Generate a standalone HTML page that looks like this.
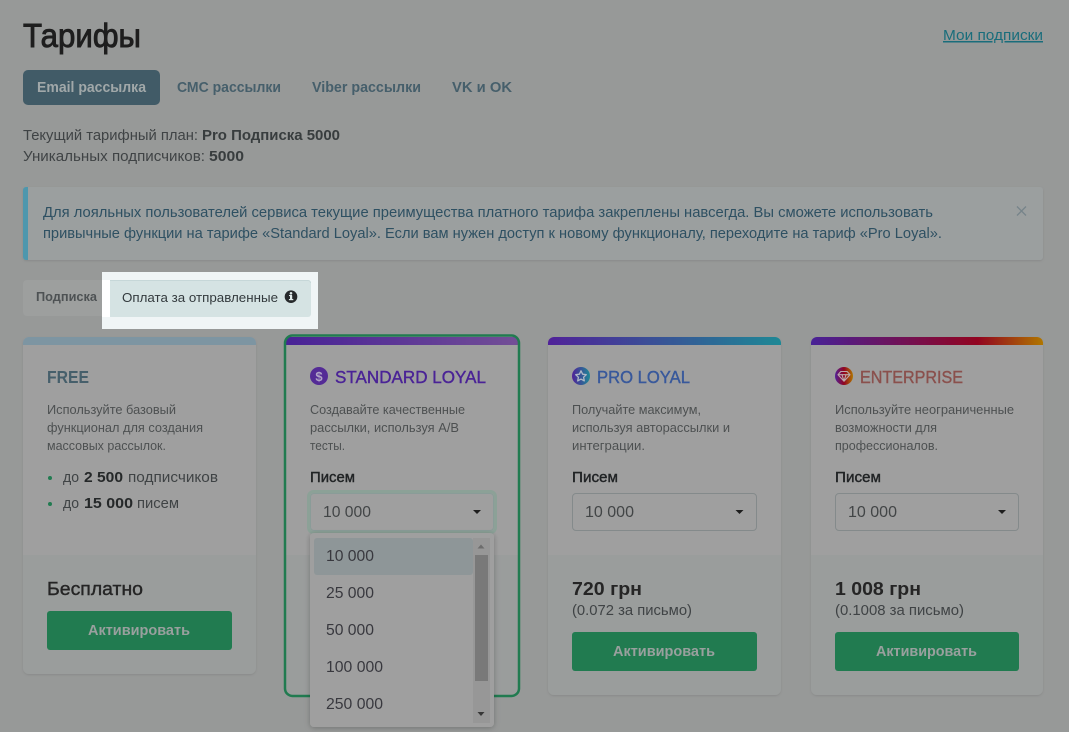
<!DOCTYPE html>
<html lang="ru"><head><meta charset="utf-8"><title>Тарифы</title>
<style>
html,body{margin:0;padding:0;width:1069px;height:732px;overflow:hidden;background:#a9abaa}
svg{display:block}
text{font-family:"Liberation Sans",sans-serif;white-space:pre}
.b{font-weight:700}
.m{stroke:currentColor;stroke-width:.4px}
.d{font-size:13px;fill:#565a5b}
.s{font-size:14.5px;fill:#474b4d}
.o{font-size:15.5px;fill:#3f3f46}
.btn{font-size:14.5px;font-weight:700;fill:#abb3b0}
.h{font-size:17.5px}
.a{font-size:14.5px;fill:#345a6e}
.n{font-size:14.5px;font-weight:700;fill:#4f6a78}
</style></head><body>
<svg width="1069" height="732" viewBox="0 0 1069 732" xmlns="http://www.w3.org/2000/svg">
<defs>
<linearGradient id="g1" x1="0" x2="1" y1="0" y2="0"><stop offset="0" stop-color="#5126a8"/><stop offset="1" stop-color="#8058a8"/></linearGradient>
<linearGradient id="g2" x1="0" x2="1" y1="0" y2="0"><stop offset="0" stop-color="#5a26ab"/><stop offset="1" stop-color="#2298a6"/></linearGradient>
<linearGradient id="g3" x1="0" x2="1" y1="0" y2="0"><stop offset="0" stop-color="#5126a8"/><stop offset=".72" stop-color="#a30524"/><stop offset="1" stop-color="#c48400"/></linearGradient>
<linearGradient id="g4" x1="0" x2="1" y1="0" y2="0"><stop offset="0" stop-color="#5a26ab"/><stop offset=".5" stop-color="#a30524"/><stop offset="1" stop-color="#c48400"/></linearGradient>
<filter id="sh" x="-10%" y="-10%" width="120%" height="120%"><feDropShadow dx="0" dy="1" stdDeviation="1" flood-color="#000" flood-opacity=".1"/></filter>
<filter id="sd" x="-20%" y="-20%" width="140%" height="140%"><feDropShadow dx="0" dy="1" stdDeviation="3" flood-color="#000" flood-opacity=".25"/></filter>
<clipPath id="c1"><rect x="23" y="337" width="233" height="337" rx="6"/></clipPath>
<clipPath id="c2"><rect x="285" y="336" width="234" height="360" rx="7"/></clipPath>
<clipPath id="c3"><rect x="548" y="337" width="233" height="358" rx="6"/></clipPath>
<clipPath id="c4"><rect x="811" y="337" width="232" height="358" rx="6"/></clipPath>
</defs>

<rect width="1069" height="732" fill="#a9abaa"/>

<!-- header -->
<text x="23" y="47" font-size="33" class="m" style="color:#222;stroke-width:.9px" fill="#222" textLength="118" lengthAdjust="spacingAndGlyphs">Тарифы</text>
<text x="943" y="40" font-size="15" fill="#1c7a8a" textLength="100" lengthAdjust="spacingAndGlyphs" text-decoration="underline">Мои подписки</text>

<!-- nav -->
<rect x="23" y="70" width="137" height="35" rx="5" fill="#496673"/>
<text x="37" y="92" class="n" style="fill:#b4bcbd" textLength="109" lengthAdjust="spacingAndGlyphs">Email рассылка</text>
<text x="177" y="92" class="n" textLength="104" lengthAdjust="spacingAndGlyphs">СМС рассылки</text>
<text x="312" y="92" class="n" textLength="109" lengthAdjust="spacingAndGlyphs">Viber рассылки</text>
<text x="452" y="92" class="n" textLength="60" lengthAdjust="spacingAndGlyphs">VK и OK</text>

<!-- plan -->
<text x="23" y="140" class="s" textLength="175" lengthAdjust="spacingAndGlyphs">Текущий тарифный план:</text>
<text x="202" y="140" font-size="14.5" class="b" fill="#3f4446" textLength="138" lengthAdjust="spacingAndGlyphs">Pro Подписка 5000</text>
<text x="23" y="161" class="s" textLength="182" lengthAdjust="spacingAndGlyphs">Уникальных подписчиков:</text>
<text x="209" y="161" font-size="14.5" class="b" fill="#3f4446" textLength="35" lengthAdjust="spacingAndGlyphs">5000</text>

<!-- alert -->
<rect x="23" y="187" width="1020" height="73" rx="3" fill="#adb1b1" filter="url(#sh)"/>
<path d="M26 187h2v73h-2a3 3 0 0 1-3-3v-67a3 3 0 0 1 3-3z" fill="#57a9c1"/>
<text x="43" y="217" class="a" textLength="890" lengthAdjust="spacingAndGlyphs">Для лояльных пользователей сервиса текущие преимущества платного тарифа закреплены навсегда. Вы сможете использовать</text>
<text x="43" y="238" class="a" textLength="899" lengthAdjust="spacingAndGlyphs">привычные функции на тарифе «Standard Loyal». Если вам нужен доступ к новому функционалу, переходите на тариф «Pro Loyal».</text>
<path d="M1017 206.500l9 9M1026 206.500l-9 9" stroke="#84939a" stroke-width="1.300" fill="none"/>

<!-- sub tabs -->
<rect x="23" y="280" width="84" height="36" rx="4" fill="#afb1b0"/>
<text x="36" y="301" font-size="13" class="b" fill="#575c5e" textLength="61" lengthAdjust="spacingAndGlyphs">Подписка</text>

<!-- card free -->
<g filter="url(#sh)"><rect x="23" y="337" width="233" height="337" rx="6" fill="#acafae"/></g>
<g clip-path="url(#c1)"><rect x="23" y="337" width="233" height="218" fill="#b2b2b2"/><rect x="23" y="337" width="233" height="8" fill="#8ca6b5"/></g>
<text x="47" y="383" class="h b" fill="#4f6a78" textLength="42" lengthAdjust="spacingAndGlyphs">FREE</text>
<text x="47" y="414" class="d" textLength="129" lengthAdjust="spacingAndGlyphs">Используйте базовый</text>
<text x="47" y="432" class="d" textLength="156" lengthAdjust="spacingAndGlyphs">функционал для создания</text>
<text x="47" y="450" class="d" textLength="119" lengthAdjust="spacingAndGlyphs">массовых рассылок.</text>
<circle cx="50" cy="478" r="2" fill="#25895a"/>
<circle cx="50" cy="504" r="2" fill="#25895a"/>
<text x="63" y="482" class="s" textLength="16" lengthAdjust="spacingAndGlyphs">до</text>
<text x="84" y="482" font-size="14.5" class="b" fill="#2a2d2e" textLength="39" lengthAdjust="spacingAndGlyphs">2 500</text>
<text x="128" y="482" class="s" textLength="90" lengthAdjust="spacingAndGlyphs">подписчиков</text>
<text x="63" y="508" class="s" textLength="16" lengthAdjust="spacingAndGlyphs">до</text>
<text x="84" y="508" font-size="14.5" class="b" fill="#2a2d2e" textLength="49" lengthAdjust="spacingAndGlyphs">15 000</text>
<text x="137" y="508" class="s" textLength="42" lengthAdjust="spacingAndGlyphs">писем</text>
<text x="47" y="595" font-size="18.5" class="m" style="color:#2a2a2a" fill="#2a2a2a" textLength="96" lengthAdjust="spacingAndGlyphs">Бесплатно</text>
<rect x="47" y="611" width="185" height="39" rx="3" fill="#25895a"/>
<text x="88" y="635" class="btn" textLength="102" lengthAdjust="spacingAndGlyphs">Активировать</text>

<!-- card standard -->
<g clip-path="url(#c2)"><rect x="285" y="336" width="234" height="360" fill="#acafae"/><rect x="285" y="336" width="234" height="219" fill="#b2b2b2"/><rect x="285" y="337" width="234" height="8" fill="url(#g1)"/></g>
<rect x="285" y="335.500" width="234" height="360.500" rx="7.500" fill="none" stroke="#25895a" stroke-width="2.500"/>
<circle cx="319" cy="376" r="9" fill="#5e30a8"/>
<text x="319" y="381" font-size="13" class="b" fill="#c6b8dd" text-anchor="middle">$</text>
<text x="335" y="383" class="h m" style="color:#5327a8" fill="#5327a8" textLength="151" lengthAdjust="spacingAndGlyphs">STANDARD LOYAL</text>
<text x="310" y="414" class="d" textLength="155" lengthAdjust="spacingAndGlyphs">Создавайте качественные</text>
<text x="310" y="432" class="d" textLength="149" lengthAdjust="spacingAndGlyphs">рассылки, используя A/B</text>
<text x="310" y="450" class="d" textLength="35" lengthAdjust="spacingAndGlyphs">тесты.</text>
<text x="310" y="482" font-size="14.5" class="m" style="color:#25282a" fill="#25282a" textLength="45" lengthAdjust="spacingAndGlyphs">Писем</text>
<rect x="308.500" y="491.500" width="187" height="41" rx="5" fill="none" stroke="#9cb4a9" stroke-width="3"/>
<rect x="310.500" y="493.500" width="183" height="37" rx="3.500" fill="#b2b2b2" stroke="#9aaeaa"/>
<text x="323" y="517" font-size="15.5" fill="#4a4d4f" textLength="48" lengthAdjust="spacingAndGlyphs">10 000</text>
<path d="M473 510h8l-4 4z" fill="#222"/>

<!-- card pro -->
<g filter="url(#sh)"><rect x="548" y="337" width="233" height="358" rx="6" fill="#acafae"/></g>
<g clip-path="url(#c3)"><rect x="548" y="337" width="233" height="218" fill="#b2b2b2"/><rect x="548" y="337" width="233" height="8" fill="url(#g2)"/></g>
<circle cx="581" cy="376" r="9" fill="url(#g2)"/>
<path d="M581 370.800l1.600 3.400 3.700.5-2.700 2.500.7 3.700-3.300-1.800-3.300 1.800.7-3.700-2.700-2.500 3.700-.5z" fill="none" stroke="#c4cddd" stroke-width="1.300" stroke-linejoin="round"/>
<text x="597" y="383" class="h m" style="color:#3f63ad" fill="#3f63ad" textLength="93" lengthAdjust="spacingAndGlyphs">PRO LOYAL</text>
<text x="572" y="414" class="d" textLength="129" lengthAdjust="spacingAndGlyphs">Получайте максимум,</text>
<text x="572" y="432" class="d" textLength="158" lengthAdjust="spacingAndGlyphs">используя авторассылки и</text>
<text x="572" y="450" class="d" textLength="73" lengthAdjust="spacingAndGlyphs">интеграции.</text>
<text x="572" y="482" font-size="14.5" class="m" style="color:#25282a" fill="#25282a" textLength="46" lengthAdjust="spacingAndGlyphs">Писем</text>
<rect x="572.500" y="493.500" width="184" height="37" rx="3.500" fill="#b2b2b2" stroke="#949a9b"/>
<text x="585" y="517" font-size="15.5" fill="#4a4d4f" textLength="49" lengthAdjust="spacingAndGlyphs">10 000</text>
<path d="M735.500 510h8l-4 4z" fill="#222"/>
<text x="572" y="595" font-size="18.5" class="b" fill="#2a2a2a" textLength="70" lengthAdjust="spacingAndGlyphs">720 грн</text>
<text x="572" y="615" class="s" textLength="120" lengthAdjust="spacingAndGlyphs">(0.072 за письмо)</text>
<rect x="572" y="632" width="185" height="39" rx="3" fill="#25895a"/>
<text x="613" y="656" class="btn" textLength="102" lengthAdjust="spacingAndGlyphs">Активировать</text>

<!-- card enterprise -->
<g filter="url(#sh)"><rect x="811" y="337" width="232" height="358" rx="6" fill="#acafae"/></g>
<g clip-path="url(#c4)"><rect x="811" y="337" width="232" height="218" fill="#b2b2b2"/><rect x="811" y="337" width="232" height="8" fill="url(#g3)"/></g>
<circle cx="844" cy="376" r="9" fill="url(#g4)"/>
<path d="M840.800 371.500h6.400l2.800 3.200-6 6.500-6-6.500zM838 374.700h12M842 374.700l2 6.500 2-6.500" fill="none" stroke="#d0bcbe" stroke-width="1.100" stroke-linejoin="round"/>
<text x="860" y="383" class="h m" style="color:#9a5a56" fill="#9a5a56" textLength="103" lengthAdjust="spacingAndGlyphs">ENTERPRISE</text>
<text x="835" y="414" class="d" textLength="179" lengthAdjust="spacingAndGlyphs">Используйте неограниченные</text>
<text x="835" y="432" class="d" textLength="102" lengthAdjust="spacingAndGlyphs">возможности для</text>
<text x="835" y="450" class="d" textLength="103" lengthAdjust="spacingAndGlyphs">профессионалов.</text>
<text x="835" y="482" font-size="14.5" class="m" style="color:#25282a" fill="#25282a" textLength="46" lengthAdjust="spacingAndGlyphs">Писем</text>
<rect x="835.500" y="493.500" width="183" height="37" rx="3.500" fill="#b2b2b2" stroke="#949a9b"/>
<text x="848" y="517" font-size="15.5" fill="#4a4d4f" textLength="49" lengthAdjust="spacingAndGlyphs">10 000</text>
<path d="M998 510h8l-4 4z" fill="#222"/>
<text x="835" y="595" font-size="18.5" class="b" fill="#2a2a2a" textLength="86" lengthAdjust="spacingAndGlyphs">1 008 грн</text>
<text x="835" y="615" class="s" textLength="129" lengthAdjust="spacingAndGlyphs">(0.1008 за письмо)</text>
<rect x="835" y="632" width="184" height="39" rx="3" fill="#25895a"/>
<text x="876" y="656" class="btn" textLength="101" lengthAdjust="spacingAndGlyphs">Активировать</text>

<!-- dropdown -->
<rect x="310" y="533" width="184" height="194" rx="4" fill="#b2b2b2" filter="url(#sd)"/>
<rect x="314" y="538" width="159" height="37" rx="3" fill="#9fa8aa"/>
<text x="326" y="561" class="o" textLength="48" lengthAdjust="spacingAndGlyphs">10 000</text>
<text x="326" y="598" class="o" textLength="48" lengthAdjust="spacingAndGlyphs">25 000</text>
<text x="326" y="635" class="o" textLength="48" lengthAdjust="spacingAndGlyphs">50 000</text>
<text x="326" y="672" class="o" textLength="57" lengthAdjust="spacingAndGlyphs">100 000</text>
<text x="326" y="709" class="o" textLength="57" lengthAdjust="spacingAndGlyphs">250 000</text>
<rect x="473" y="538" width="17" height="185" fill="#a9a9a9"/>
<rect x="475" y="555" width="13" height="126" fill="#878787"/>
<path d="M481 544.500l3.500 4h-7z" fill="#7a7a7a"/>
<path d="M477.500 712h7l-3.500 4z" fill="#3e3e3e"/>

<!-- dim layer -->
<rect width="1069" height="732" fill="#000" opacity=".1"/>

<!-- highlighted tab above the dim layer -->
<rect x="102" y="272" width="216" height="57" fill="#f0f5f6"/>
<rect x="102" y="280" width="8" height="37" fill="#fff"/>
<path d="M110 280h198a3 3 0 0 1 3 3v31a3 3 0 0 1-3 3h-198z" fill="#d5e3e3"/>
<path d="M110 280.500h198a2.500 2.500 0 0 1 2.500 2.500" fill="none" stroke="#c6d7d8"/>
<text x="122" y="302" font-size="13" fill="#333a3d" textLength="156" lengthAdjust="spacingAndGlyphs">Оплата за отправленные</text>
<circle cx="291" cy="296.700" r="6.300" fill="#26292b"/>
<rect x="290" y="295.500" width="2.200" height="4" fill="#e2ecec"/>
<rect x="288.900" y="299" width="4.400" height="1.200" fill="#e2ecec"/>
<rect x="289" y="295" width="3" height="1.100" fill="#e2ecec"/>
<circle cx="291" cy="293.300" r="1.300" fill="#e2ecec"/>
</svg>
</body></html>
